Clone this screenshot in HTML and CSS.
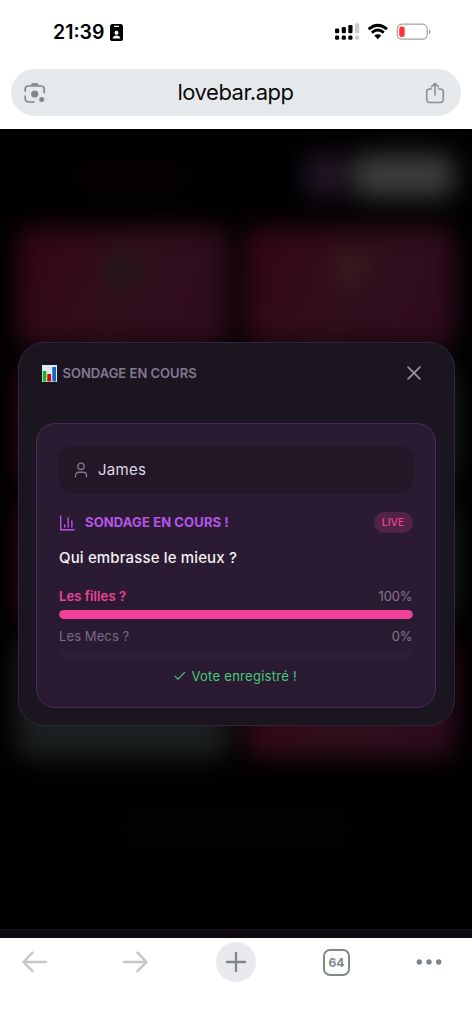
FILE: index.html
```html
<!DOCTYPE html>
<html lang="fr">
<head>
<meta charset="utf-8">
<title>lovebar.app</title>
<link rel="stylesheet" href="styles.css">
</head>
<body>
<header class="browser-top">
  <div class="status">
    <div class="clock"><span>21:39</span>
      <svg width="13" height="17" viewBox="0 0 13 17"><rect width="13" height="17" rx="2.6"/><rect x="4" y="1.7" width="5" height="1.3" rx=".6" fill="#fff"/><circle cx="6.5" cy="8.8" r="2" fill="#fff"/><path d="M2.6 14.6c.3-2.2 2-3.2 3.9-3.2s3.600 1 3.900 3.200z" fill="#fff"/></svg>
    </div>
    <svg class="signals" width="98" height="18" viewBox="0 0 98 18">
      <g><rect x="0" y="5.600" width="4.200" height="4.700" rx="1.200"/><rect x="6.700" y="4" width="4.200" height="6.300" rx="1.200"/><rect x="13.300" y="2" width="4.200" height="8.300" rx="1.200"/><rect x="20" y="0.300" width="4.200" height="10" rx="1.200" fill="#ccc"/><rect x="0" y="12.600" width="4.200" height="4.200" rx="1.400"/><rect x="6.700" y="12.600" width="4.200" height="4.200" rx="1.400"/><rect x="13.300" y="12.600" width="4.200" height="4.200" rx="1.400"/><rect x="20" y="12.600" width="4.200" height="4.200" rx="1.400" fill="#ccc"/></g>
      <path d="M33.600 6.200Q42.800-1.600 52 6.200M36.800 9.600Q42.800 4.600 48.800 9.600" fill="none" stroke="#000" stroke-width="2.900"/>
      <path d="M39.300 12.600Q42.800 9.700 46.300 12.600L42.800 16.200z"/>
      <rect x="62.200" y="1.200" width="30" height="15" rx="4.700" fill="none" stroke="#a2a2a2" stroke-width="1.200"/>
      <rect x="64.200" y="3.500" width="5.500" height="10.500" rx="2.300" fill="#ff3434"/>
      <path d="M94 6.200q3 2.500 0 5z" fill="#999"/>
    </svg>
  </div>
  <div class="address">
    <svg width="22" height="22" viewBox="0 0 22 22" fill="none" stroke="#80878c" stroke-width="1.700" stroke-linecap="round">
      <path d="M1.200 9V7a3 3 0 0 1 3-3h13a3 3 0 0 1 3 3v3.500M1.200 14v2.500a3.500 3.500 0 0 0 3.500 3.500H10"/><path d="M6.500 3.500 8 1.200h5.500L15 3.500z" fill="#80878c" stroke="none"/><circle cx="10.700" cy="12" r="3.600" fill="#80878c" stroke="none"/><circle cx="17.700" cy="17.600" r="2.500" fill="#80878c" stroke="none"/>
    </svg>
    <span class="url">lovebar.app</span>
    <svg width="20" height="22" viewBox="0 0 20 22" fill="none" stroke="#899096" stroke-width="1.600" stroke-linecap="round" stroke-linejoin="round"><path d="M6.500 7H4.500A3 3 0 0 0 1.700 10v7.500A3 3 0 0 0 4.700 20.500h10.600a3 3 0 0 0 3-3V10a3 3 0 0 0-2.800-3h-2M10 13V1.500M6.500 4.700 10 1.300l3.500 3.400"/></svg>
  </div>
</header>

<main class="page">
  <div class="app">
    <div class="app-bar"><i class="brand"></i><i class="chip"></i><i class="button"></i></div>
    <div class="tiles">
      <i class="tile"><b class="mark green"></b></i><i class="tile"><b class="mark olive"></b></i>
      <i class="tile"></i><i class="tile gray"></i>
      <i class="tile"></i><i class="tile gray"></i>
      <i class="tile gray"></i><i class="tile"></i>
    </div>
    <i class="note"></i>
  </div>
  <div class="overlay">
    <section class="modal">
      <div class="modal-head">
        <svg width="15" height="17" viewBox="0 0 15 17"><path fill="#dfe8ee" d="M0 0h15v17H0z"/><path fill="#14b51d" d="M.8 6h3.500v10.500H.8z"/><path fill="#c40d15" d="M5.300 9h3.800v7.500H5.300z"/><path fill="#1766c4" d="M10.300 2h3.700v14.500h-3.700z"/></svg>
        <h2>SONDAGE EN COURS</h2>
        <svg class="close" width="14" height="14" viewBox="0 0 14 14"><path d="M1.100 1.100l11.800 11.800M12.900 1.100 1.100 12.900" fill="none" stroke="#9b91a6" stroke-width="1.700" stroke-linecap="round"/></svg>
      </div>
      <div class="modal-body">
        <div class="poll">
          <div class="name-field">
            <svg width="14" height="16" viewBox="0 0 14 16" fill="none" stroke="#84738f" stroke-width="1.400" stroke-linecap="round"><circle cx="7" cy="4.300" r="3.200"/><path d="M1.500 14.800v-1.300a3.300 3.300 0 0 1 3.300-3.300h4.400a3.300 3.300 0 0 1 3.300 3.300v1.300"/></svg>
            <span>James</span>
          </div>
          <div class="poll-head">
            <svg width="16" height="16" viewBox="0 0 16 16" fill="none" stroke="#b654eb" stroke-width="1.400" stroke-linecap="round"><path d="M1.700 1v13.700h13.500M5.700 10v2M9.200 3v9M12.900 6v6"/></svg>
            <h3>SONDAGE EN COURS !</h3><span class="live">LIVE</span>
          </div>
          <p class="question">Qui embrasse le mieux ?</p>
          <div class="option chosen"><span class="label">Les filles ?</span><span class="pct">100%</span></div>
          <div class="bar"><div class="fill" style="width:100%"></div></div>
          <div class="option"><span class="label">Les Mecs ?</span><span class="pct">0%</span></div>
          <div class="bar"></div>
          <p class="saved"><svg width="12" height="10" viewBox="0 0 12 10"><path d="M1.200 5.300 4 8.200 10.700 1.300" fill="none" stroke="#48c979" stroke-width="1.200" stroke-linecap="round"/></svg><span>Vote enregistré !</span></p>
        </div>
      </div>
    </section>
  </div>
  <div class="app-nav"></div>
</main>

<nav class="toolbar">
  <svg width="26" height="22" viewBox="0 0 26 22" class="arrow"><path d="M24 11H1.500M10.500 1.700 1.500 11l9 9.200"/></svg>
  <svg width="26" height="22" viewBox="0 0 26 22" class="arrow"><path d="M2 11h22.500M15.500 1.700l9 9.300-9 9.200"/></svg>
  <span class="new-tab"><svg width="20" height="20" viewBox="0 0 20 20"><path d="M1 10h18M10 1v18" stroke="#7f868b" stroke-width="2.300" stroke-linecap="round"/></svg></span>
  <span class="tabs">64</span>
  <svg width="26" height="8" viewBox="0 0 26 8" fill="#7f868b"><circle cx="3.300" cy="4" r="2.700"/><circle cx="13" cy="4" r="2.700"/><circle cx="22.700" cy="4" r="2.700"/></svg>
</nav>
</body>
</html>
```
FILE: styles.css
```css
* { box-sizing: border-box; }
body { margin: 0; width: 472px; height: 1024px; background: #fff; overflow: hidden; font-family: Inter, "Liberation Sans", sans-serif; display: flex; flex-direction: column; }
h2, h3, p { margin: 0; }
svg { display: block; flex: none; }
i, b { display: block; }

.browser-top { height: 129px; padding: 0 11px; }
.status { height: 69px; padding: 23px 28px 0 42px; display: flex; justify-content: space-between; }
.clock { display: flex; gap: 5px; height: 18px; align-items: center; font-size: 19.5px; font-weight: 600; line-height: 18px; }
.address { height: 47px; border-radius: 24px; background: #e6e9ec; padding: 0 16px 0 13px; display: flex; align-items: center; justify-content: space-between; }
.url { font-size: 22px; line-height: 26px; letter-spacing: -.5px; padding-bottom: 1px; color: #0b0b0c; }

.page { height: 809px; background: #000; overflow: hidden; display: grid; grid-template: 800px 9px / 472px; }
.app { grid-area: 1 / 1; padding: 25px 17px 0; filter: blur(13px); }
.app-bar { display: flex; height: 73px; align-items: flex-start; }
.brand { width: 110px; height: 20px; margin: 14px auto 0 60px; background: #0c0206; border-radius: 10px; }
.chip { width: 42px; height: 42px; background: #25152a; border-radius: 14px; margin-right: 6px; }
.button { width: 103px; height: 43px; background: #3e3e3e; border-radius: 14px; }
.tiles { display: grid; grid-template-columns: 1fr 1fr; grid-auto-rows: 120px; gap: 17px; }
.tile { background: linear-gradient(120deg, #350514, #300e1b 50%, #2f0b1e); border-radius: 14px; padding-top: 25px; }
.gray { background: #1c1f21; }
.mark { width: 32px; height: 32px; border-radius: 50%; margin: 0 auto; }
.green { background: #1a1d19; }
.olive { background: #38211f; }
.note { width: 240px; height: 36px; margin: 52px auto 0; background: #030304; border-radius: 18px; }
.app-nav { grid-area: 2 / 1; background: #0d0a11; border-top: 1px solid #18151c; }
.overlay { grid-area: 1 / 1; z-index: 1; padding: 213px 17.5px 0; }

.modal { height: 384px; border: 1px solid #30263a; border-radius: 26px; background: #1b151f; }
.modal-head { height: 63px; padding: 0 33px 2px 23px; border-bottom: 1px solid #211a26; display: flex; align-items: center; gap: 6px; }
.modal-head h2 { font-size: 13px; font-weight: 600; letter-spacing: 0; color: #857992; white-space: nowrap; }
.close { margin-left: auto; }
.modal-body { padding: 17px 18px 17px 17.500px; }
.poll { height: 285px; border: 1px solid #4b285b; border-radius: 19px; background: #2a1b32; padding: 22px; }
.name-field { height: 48px; border-radius: 13px; background: #231727; display: flex; align-items: center; gap: 10px; padding: 0 15px 1px; color: #ded9e1; font-size: 15px; letter-spacing: .3px; }
.poll-head { height: 21px; margin-top: 18px; display: flex; align-items: center; gap: 10px; color: #b654eb; }
.poll-head h3 { font-size: 13px; line-height: 16px; padding-bottom: 1px; font-weight: 700; letter-spacing: .12px; white-space: nowrap; }
.live { width: 39px; height: 21px; margin-left: auto; border-radius: 11px; background: #512346; color: #eb459a; display: grid; place-items: center; font-size: 10.5px; font-weight: 500; }
.question { margin-top: 15px; height: 20px; line-height: 20px; font-size: 15px; font-weight: 500; letter-spacing: .14px; color: #f4f0f6; }
.option { height: 18px; margin-top: 19px; display: flex; align-items: center; justify-content: space-between; color: #796b83; font-size: 13px; letter-spacing: .1px; }
.bar + .option { margin-top: 8px; }
.chosen .label { color: #ed459a; font-weight: 600; letter-spacing: .1px; }
.pct { color: #85778f; letter-spacing: -.1px; }
.bar { height: 9px; margin-top: 5px; border-radius: 5px; background: #2d1e36; overflow: hidden; }
.fill { height: 100%; border-radius: 5px; background: #f2419a; }
.saved { height: 18px; margin-top: 8px; display: flex; align-items: center; justify-content: center; gap: 5px; font-size: 13px; letter-spacing: .28px; color: #48c979; }

.toolbar { height: 86px; padding: 4px 30px 0 22px; display: grid; grid-template-columns: 100px 94px 106px 94px 26px; align-items: start; }
.toolbar > * { margin-top: 9px; }
.arrow { fill: none; stroke: #c6c6c6; stroke-width: 2.500; stroke-linecap: round; stroke-linejoin: round; }
.toolbar .new-tab { width: 40px; height: 40px; margin-top: 0; border-radius: 50%; background: #e8e9ed; display: grid; place-items: center; }
.toolbar .tabs { width: 27px; height: 27px; margin: 7px 0 0 1px; border: 2px solid #7f888b; border-radius: 7px; display: grid; place-items: center; font-size: 12px; font-weight: 700; color: #7f888b; }
.toolbar > :last-child { margin-top: 16px; }
```
